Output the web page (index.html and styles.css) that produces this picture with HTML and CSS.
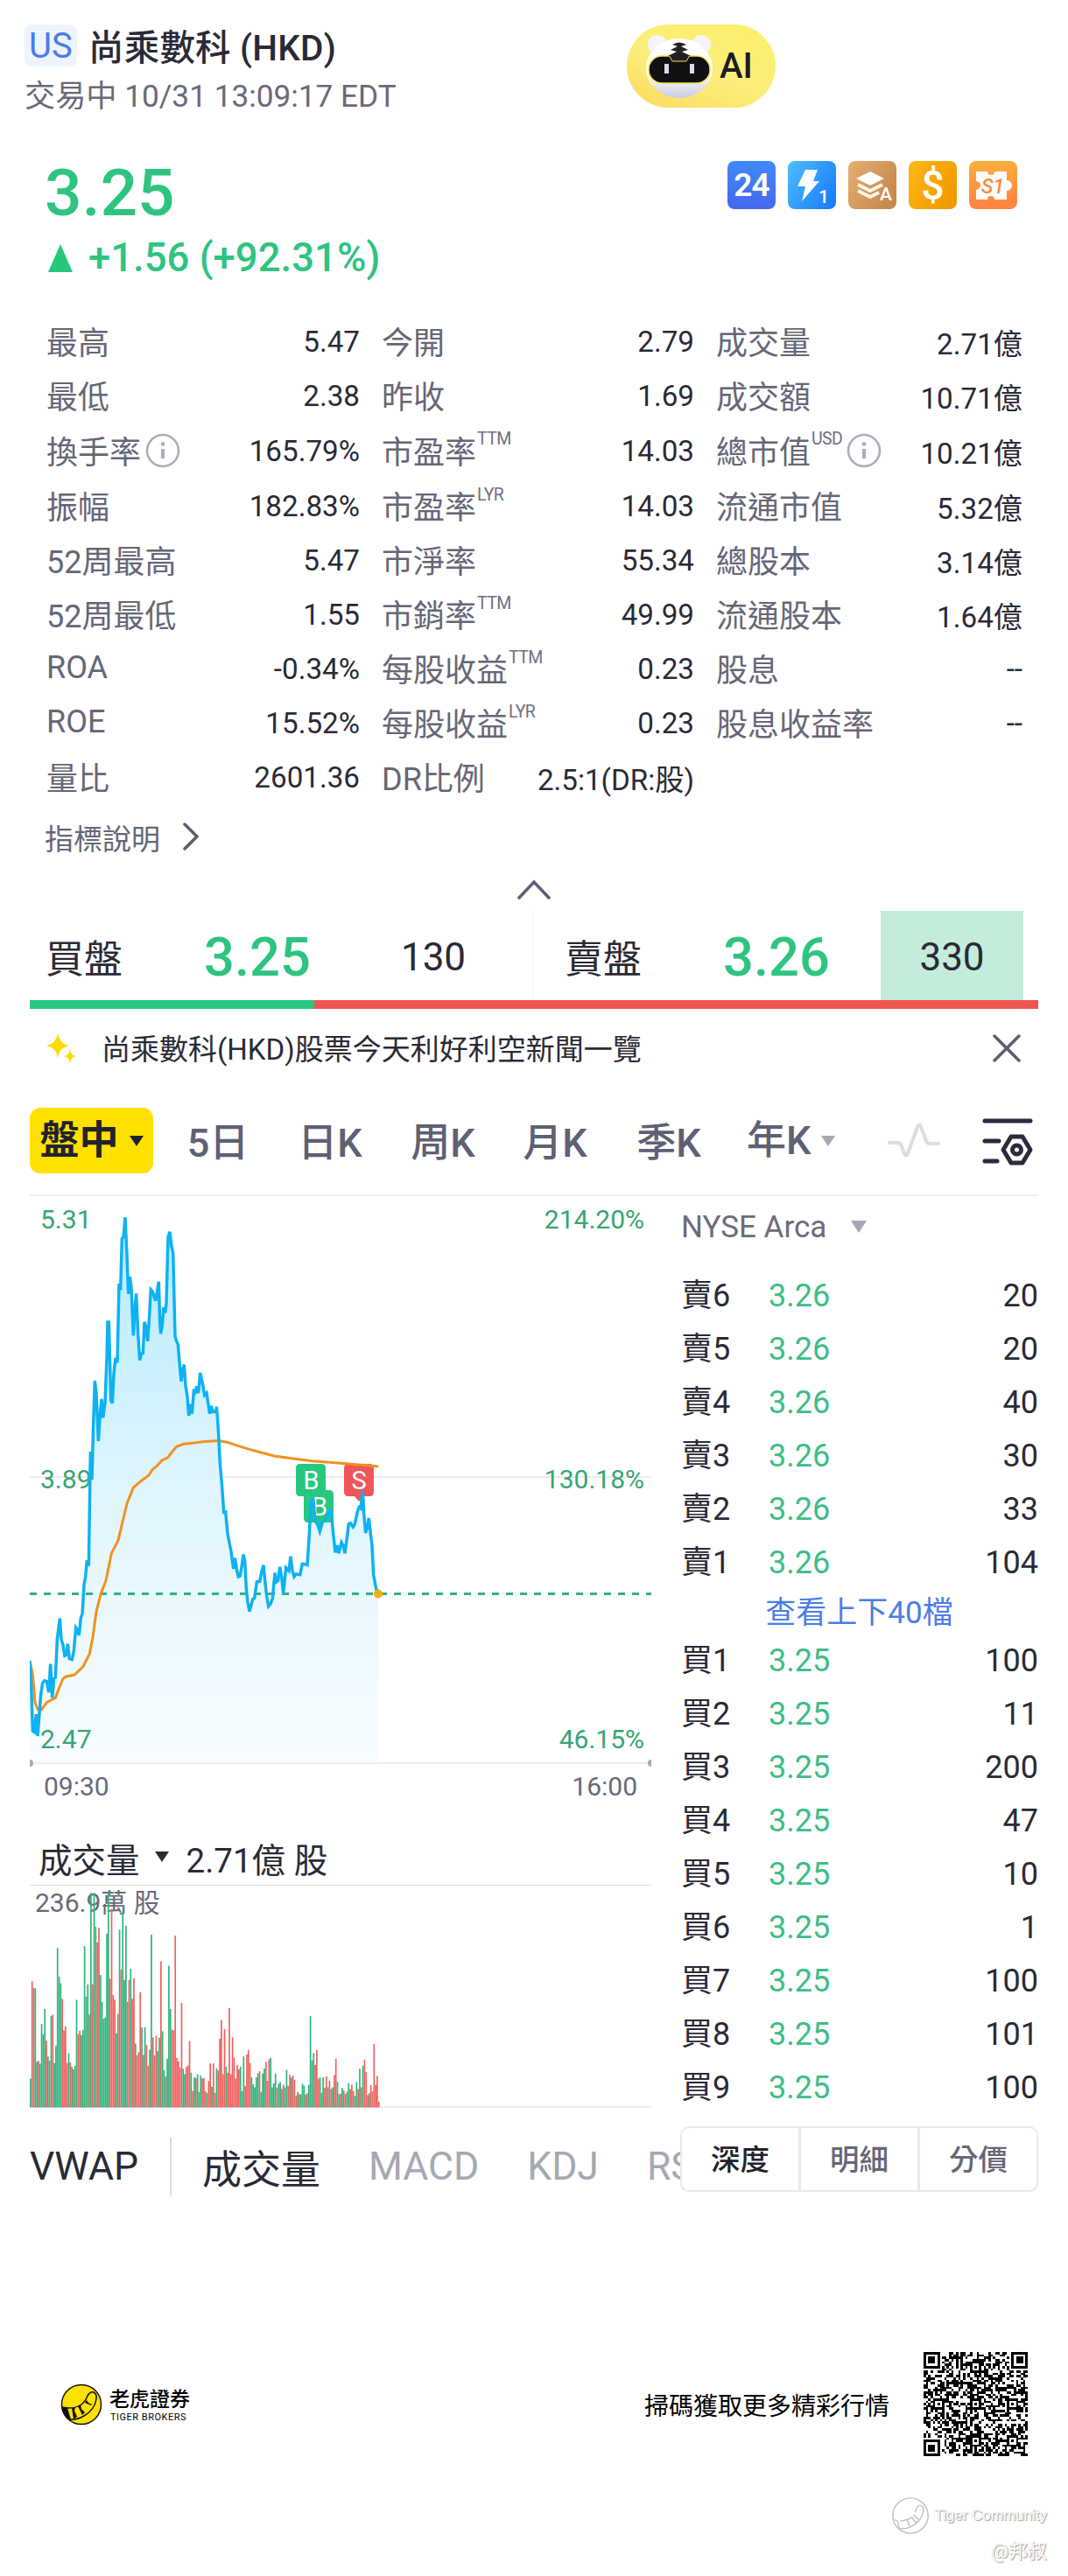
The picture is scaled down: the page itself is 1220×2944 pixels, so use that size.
FILE: index.html
```html
<!doctype html>
<html lang="zh-Hant">
	<head>
		<meta charset="utf-8">
		<meta name="viewport" content="width=device-width, initial-scale=1">
		<title>尚乘數科 (HKD)</title>
		<link rel="stylesheet" href="styles.css">
	</head>
	<body>
		<header class="header">
			<div class="header-info">
				<h1 class="title"><span class="market">US</span>尚乘數科 (HKD)</h1>
				<div class="status">交易中 10/31 13:09:17 EDT</div>
			</div>
			<button class="ai-button">
				<svg width="80" height="74" viewBox="0 0 80 74">
					<defs>
						<linearGradient id="head" x1="0" y1="0" x2="0" y2="1">
							<stop offset="0.6" stop-color="#fff" />
							<stop offset="1" stop-color="#c9cbe2" />
						</linearGradient>
					</defs>
					<circle cx="14" cy="12" r="11" fill="#f4f4fa" />
					<circle cx="64" cy="12" r="11" fill="#f4f4fa" />
					<ellipse cx="39" cy="39" rx="38" ry="34" fill="url(#head)" />
					<rect x="4" y="25" width="70" height="31" rx="15" fill="#111" stroke="#f3e34a" stroke-width="1.5" />
					<path d="M27 24l4 7h16l4-7z" fill="#222" stroke="#f3e34a" stroke-width="1" />
					<path d="M31 12q8-5 16 0l-6 2 8 4-7 2 10 5H26l10-5-7-2 8-4z" fill="#222" />
					<rect x="22" y="34" width="5" height="11" fill="#dcdce6" />
					<rect x="51" y="34" width="5" height="11" fill="#dcdce6" />
				</svg>
				<span>AI</span>
			</button>
		</header>

		<section class="quote">
			<div class="price-row">
				<div class="price">3.25</div>
				<div class="tags">
					<span class="tag tag-24">24</span>
					<span class="tag tag-level">
						<svg width="55" height="55" viewBox="0 0 55 55">
							<path d="M20 10h14l-5 13h7L16 46l4-17h-9z" fill="#fff" />
							<text x="35" y="48" class="tag-small">1</text>
						</svg>
					</span>
					<span class="tag tag-layer">
						<svg width="55" height="55" viewBox="0 0 55 55">
							<path d="M25 12l16 8-16 8-16-8z" fill="#fff" />
							<path d="M11 27l14 7 14-7M11 34l14 7 10-5" fill="none" stroke="#fff5e6" stroke-width="4" />
							<text x="36" y="45" class="tag-small">A</text>
						</svg>
					</span>
					<span class="tag tag-dollar">$</span>
					<span class="tag tag-coupon">
						<svg width="55" height="55" viewBox="0 0 55 55">
							<path d="M8 12h13a4 4 0 0 0 8 0h14v10a6 6 0 0 1 0 12v10H29a4 4 0 0 0-8 0H8V33a5 5 0 0 0 0-10z" fill="#fff" />
							<text x="14" y="37" class="coupon-text">S1</text>
						</svg>
					</span>
				</div>
			</div>
			<div class="change"><i class="up"></i>+1.56 (+92.31%)</div>
		</section>

		<section class="stats">
			<div class="stat"><label>最高</label><b>5.47</b></div>
			<div class="stat"><label>今開</label><b>2.79</b></div>
			<div class="stat"><label>成交量</label><b>2.71億</b></div>
			<div class="stat"><label>最低</label><b>2.38</b></div>
			<div class="stat"><label>昨收</label><b>1.69</b></div>
			<div class="stat"><label>成交額</label><b>10.71億</b></div>
			<div class="stat">
				<label>換手率</label>
				<svg class="info" width="40" height="40" viewBox="0 0 40 40"><circle cx="20" cy="20" r="18" /><path d="M20 18v11M20 10.5v4" /></svg>
				<b>165.79%</b>
			</div>
			<div class="stat"><label>市盈率</label><sup>TTM</sup><b>14.03</b></div>
			<div class="stat">
				<label>總市值</label><sup>USD</sup>
				<svg class="info" width="40" height="40" viewBox="0 0 40 40"><circle cx="20" cy="20" r="18" /><path d="M20 18v11M20 10.5v4" /></svg>
				<b>10.21億</b>
			</div>
			<div class="stat"><label>振幅</label><b>182.83%</b></div>
			<div class="stat"><label>市盈率</label><sup>LYR</sup><b>14.03</b></div>
			<div class="stat"><label>流通市值</label><b>5.32億</b></div>
			<div class="stat"><label>52周最高</label><b>5.47</b></div>
			<div class="stat"><label>市淨率</label><b>55.34</b></div>
			<div class="stat"><label>總股本</label><b>3.14億</b></div>
			<div class="stat"><label>52周最低</label><b>1.55</b></div>
			<div class="stat"><label>市銷率</label><sup>TTM</sup><b>49.99</b></div>
			<div class="stat"><label>流通股本</label><b>1.64億</b></div>
			<div class="stat"><label>ROA</label><b>-0.34%</b></div>
			<div class="stat"><label>每股收益</label><sup>TTM</sup><b>0.23</b></div>
			<div class="stat"><label>股息</label><b>--</b></div>
			<div class="stat"><label>ROE</label><b>15.52%</b></div>
			<div class="stat"><label>每股收益</label><sup>LYR</sup><b>0.23</b></div>
			<div class="stat"><label>股息收益率</label><b>--</b></div>
			<div class="stat"><label>量比</label><b>2601.36</b></div>
			<div class="stat"><label>DR比例</label><b>2.5:1(DR:股)</b></div>
		</section>
		<div class="explain">
			指標說明
			<svg width="20" height="34" viewBox="0 0 20 34"><path d="M2 3l14 14L2 31" /></svg>
		</div>
		<div class="collapse">
			<svg width="38" height="24" viewBox="0 0 38 24"><path d="M2 21L19 3l17 18" /></svg>
		</div>

		<section class="bidask">
			<div class="side bid">
				<span class="side-name">買盤</span>
				<span class="side-price">3.25</span>
				<span class="side-size">130</span>
			</div>
			<div class="side ask">
				<span class="side-name">賣盤</span>
				<span class="side-price">3.26</span>
				<span class="side-size flash">330</span>
			</div>
		</section>
		<div class="ratio"><div class="ratio-bid"></div></div>

		<div class="news">
			<svg width="36" height="36" viewBox="0 0 36 36">
				<path d="M14 1q2 12 13 14-11 2-13 14Q12 17 1 15 12 13 14 1z" fill="#ffdc00" />
				<path d="M28 19q1 7 7 8-6 1-7 8-1-7-7-8 6-1 7-8z" fill="#ffdc00" />
			</svg>
			<span class="news-text">尚乘數科(HKD)股票今天利好利空新聞一覽</span>
			<svg class="close" width="32" height="32" viewBox="0 0 32 32"><path d="M2 2l28 28M30 2L2 30" /></svg>
		</div>

		<nav class="periods">
			<span class="period active">盤中<i class="down"></i></span>
			<span class="period">5日</span>
			<span class="period">日K</span>
			<span class="period">周K</span>
			<span class="period">月K</span>
			<span class="period">季K</span>
			<span class="period year">年K<i class="down"></i></span>
			<svg class="wave" width="60" height="44" viewBox="0 0 60 44"><path d="M2 24h9q4 0 5 4l3 8q2 5 4 0L34 6q2-5 4 0l6 16q1 3 5 3h9" /></svg>
			<svg class="settings" width="60" height="56" viewBox="0 0 60 56">
				<path d="M4 4h52M4 27h16M4 50h14" />
				<path d="M34 22h13l9 15-9 15H34l-9-15z" stroke-linejoin="round" />
				<circle cx="40.500" cy="37" r="5" />
			</svg>
		</nav>

		<main class="main">
			<div class="charts">
				<svg class="price-chart" width="710" height="693" viewBox="0 0 710 693">
					<defs>
						<linearGradient id="area" x1="0" y1="0" x2="0" y2="1">
							<stop offset="0" stop-color="#b4ebff" />
							<stop offset="0.5" stop-color="#e0f5fd" />
							<stop offset="1" stop-color="#f8fdff" />
						</linearGradient>
					</defs>
					<path class="grid" d="M0 321H710M0 648H710" />
					<svg width="710" height="693" viewBox="42 15.700 2130 1552.300" preserveAspectRatio="none">
						<path id="price-area" fill="url(#area)" />
					</svg>
					<path d="M0 454.500H710" class="last" />
					<circle cx="0" cy="648" r="4" fill="#aaa" />
					<circle cx="710" cy="648" r="4" fill="#aaa" />
					<g class="axis">
						<text x="12" y="37">5.31</text>
						<text x="12" y="334">3.89</text>
						<text x="12" y="631">2.47</text>
						<text x="702" y="37" text-anchor="end">214.20%</text>
						<text x="702" y="334" text-anchor="end">130.18%</text>
						<text x="702" y="631" text-anchor="end">46.15%</text>
					</g>
					<g class="time">
						<text x="16" y="685">09:30</text>
						<text x="694" y="685" text-anchor="end">16:00</text>
					</g>
					<g class="marks">
						<path d="M309 306h24q5 0 5 5v27q0 5-5 5h-7l-5 6-5-6h-7q-5 0-5-5v-27q0-5 5-5z" fill="#28c77f" />
						<text x="321.500" y="335">B</text>
						<path d="M318 336h24q5 0 5 5v27q0 5-5 5h-7l-5 6-5-6h-7q-5 0-5-5v-27q0-5 5-5z" fill="#28c77f" />
						<text x="331" y="365">B</text>
						<path d="M364 306h24q5 0 5 5v27q0 5-5 5h-7l-5 6-5-6h-7q-5 0-5-5v-27q0-5 5-5z" fill="#f05558" />
						<text x="376" y="335">S</text>
					</g>
					<svg width="710" height="693" viewBox="42 15.700 2130 1552.300" preserveAspectRatio="none">
						<polyline id="vwap-line" class="line vwap" />
						<polyline id="price-line" class="line" />
					</svg>
					<circle cx="398" cy="454.500" r="5" fill="#f9ae0c" />
				</svg>

				<div class="volume-title">成交量<i class="down"></i>2.71億 股</div>
				<svg class="volume-chart" width="710" height="255" viewBox="0 0 710 255">
					<path class="grid" d="M0 253H710" />
					<text x="6" y="30">236.9萬 股</text>
					<g id="volume-bars"></g>
				</svg>

				<div class="indicators">
					<span class="main-indicator">VWAP</span>
					<span class="selected">成交量</span>
					<span>MACD</span>
					<span>KDJ</span>
					<span>RSI</span>
				</div>
			</div>

			<div class="depth">
				<div class="exchange">NYSE Arca<i class="down"></i></div>
				<div class="book">
					<div class="book-rows">
						<div class="level"><span>賣7</span></div>
						<div class="level"><span>賣6</span><em>3.26</em><b>20</b></div>
						<div class="level"><span>賣5</span><em>3.26</em><b>20</b></div>
						<div class="level"><span>賣4</span><em>3.26</em><b>40</b></div>
						<div class="level"><span>賣3</span><em>3.26</em><b>30</b></div>
						<div class="level"><span>賣2</span><em>3.26</em><b>33</b></div>
						<div class="level"><span>賣1</span><em>3.26</em><b>104</b></div>
						<a class="more">查看上下40檔</a>
						<div class="level"><span>買1</span><em>3.25</em><b>100</b></div>
						<div class="level"><span>買2</span><em>3.25</em><b>11</b></div>
						<div class="level"><span>買3</span><em>3.25</em><b>200</b></div>
						<div class="level"><span>買4</span><em>3.25</em><b>47</b></div>
						<div class="level"><span>買5</span><em>3.25</em><b>10</b></div>
						<div class="level"><span>買6</span><em>3.25</em><b>1</b></div>
						<div class="level"><span>買7</span><em>3.25</em><b>100</b></div>
						<div class="level"><span>買8</span><em>3.25</em><b>101</b></div>
						<div class="level"><span>買9</span><em>3.25</em><b>100</b></div>
						<div class="level"><span>買10</span></div>
					</div>
				</div>
				<div class="depth-tabs">
					<span class="selected">深度</span>
					<span>明細</span>
					<span>分價</span>
				</div>
			</div>
		</main>

		<footer class="footer">
			<svg class="logo" width="48" height="48" viewBox="0 0 48 48">
				<circle cx="24" cy="24" r="22.500" fill="#ffe100" stroke="#111" stroke-width="1.500" />
				<path d="M2 27q13 3 22-3 5-4 7-10 3-5 7-4 4 2 3 8-2 12-14 19-8 5-17 4" fill="none" stroke="#111" stroke-width="1.500" />
				<path d="M2 27l6 1 4 13-4-1q-5-5-6-13zM13 28l4-1-1 4 3 7-4 3zM20 26l3-2 1 5 4 4-3 3zM28 22l2-3 2 3 4 2-1 1z" fill="#111" />
			</svg>
			<div class="brand">
				<strong>老虎證券</strong>
				<small>TIGER BROKERS</small>
			</div>
			<span class="scan">掃碼獲取更多精彩行情</span>
			<svg class="qr" width="119" height="119" viewBox="0 0 45 45" shape-rendering="crispEdges"><path id="qr-path" /></svg>
		</footer>

		<div class="community">
			<div class="community-name">
				<svg width="44" height="44" viewBox="0 0 48 48">
					<circle cx="24" cy="24" r="22" />
					<path d="M4 29l4 2 2 9q14 2 25-10 7-10 5-16-4-6-8 0l-2 6M11 31l9-2 3 8M20 29l6-3 5 7M28 23l6 6" />
				</svg>
				Tiger Community
			</div>
			<div class="author">@邦叔</div>
		</div>

		<script src="chart.js"></script>
	</body>
</html>
```

FILE: styles.css
```css
body {
	margin: 0;
	width: 1220px;
	height: 2944px;
	overflow: hidden;
	background: #fff;
	color: #2a2a35;
	font-family: Roboto, "Noto Sans CJK TC", sans-serif;
}

i, em {
	font-style: normal;
}

b {
	font-weight: 400;
}

svg {
	flex: none;
	display: block;
}

.header {
	display: flex;
	height: 140px;
	padding: 28px 0 0 28px;
	box-sizing: border-box;
}

.header-info {
	width: 688px;
}

.title {
	display: flex;
	margin: 0;
	font-size: 40.500px;
	font-weight: 500;
	line-height: 54px;
	letter-spacing: 0.200px;
	height: 48px;
}

.market {
	width: 60px;
	height: 48px;
	margin-right: 13px;
	line-height: 49px;
	border-radius: 8px;
	background: #eef4fe;
	color: #4a7de8;
	font-size: 40px;
	font-weight: 400;
	text-align: center;
}

.status {
	margin-top: 13px;
	font-size: 35.200px;
	line-height: 42px;
	color: #696979;
}

.ai-button {
	display: flex;
	align-items: center;
	width: 170px;
	height: 95px;
	padding: 0 0 0 21px;
	border: 0;
	border-radius: 48px;
	background: linear-gradient(200deg, #fdf06a, #fdee7c 55%, #fbd95c);
	color: #1c1c22;
	font: 500 40px Roboto, sans-serif;
}

.ai-button span {
	margin-left: 5px;
}

.quote {
	height: 219px;
	padding: 0 58px 0 51px;
}

.price-row {
	display: flex;
	justify-content: space-between;
	height: 130px;
}

.price {
	margin-top: 30px;
	font-size: 75px;
	font-weight: 500;
	line-height: 100px;
	color: #2ec480;
}

.tags {
	display: flex;
	gap: 14px;
	margin-top: 44px;
}

.tag {
	width: 55px;
	height: 55px;
	border-radius: 8px;
	color: #fff;
	font-weight: 500;
	line-height: 56px;
	text-align: center;
}

.tag-24 {
	background: linear-gradient(180deg, #3f8af8, #4767f0);
	font-size: 37px;
	font-weight: 600;
	letter-spacing: -1px;
}

.tag-level {
	background: linear-gradient(120deg, #4fbcff, #1478f8);
}

.tag-layer {
	background: linear-gradient(120deg, #e4ae72, #c28448);
}

.tag-dollar {
	background: linear-gradient(120deg, #fdb813, #f19500);
	font-size: 46px;
}

.tag-coupon {
	background: linear-gradient(180deg, #fcae3a, #ff8244);
}

.tag-small {
	fill: #fff;
	font-size: 21px;
	text-anchor: start;
}

.coupon-text {
	fill: #f98a3c;
	font-size: 23px;
	font-style: italic;
	text-anchor: start;
}

.change {
	display: flex;
	align-items: center;
	font-size: 45.500px;
	font-weight: 500;
	line-height: 50px;
	color: #2ec480;
}

.up {
	margin: 0 18px 0 4px;
	border: 14px solid transparent;
	border-top: 0;
	border-bottom: 32px solid #28c77f;
}

.down {
	border: 8px solid transparent;
	border-bottom: 0;
	border-top: 12px solid currentColor;
}

.stats {
	display: grid;
	grid-template-columns: 358px 357px 350px;
	grid-template-rows: 62px 62px 64px repeat(6, 62px);
	column-gap: 25px;
	padding-left: 53px;
}

.stat {
	display: flex;
	align-items: center;
	font-size: 33.200px;
}

.stat label {
	margin-top: -2px;
	font-size: 36px;
	color: #666676;
}

.stat sup {
	align-self: flex-start;
	margin: 9px 0 0 1px;
	font-size: 19.500px;
	line-height: 20px;
	letter-spacing: -0.600px;
	color: #6f6f7e;
}

.stat b {
	margin-left: auto;
}

.info {
	margin-left: 5px;
	fill: none;
	stroke: #a8adb8;
	stroke-width: 2.500;
}

.info path {
	stroke-width: 4;
}

.explain {
	display: flex;
	align-items: center;
	gap: 26px;
	height: 76px;
	padding-left: 51px;
	font-size: 33px;
	color: #666676;
}

.explain svg {
	margin-top: -3px;
}

.explain svg, .collapse svg, .close {
	fill: none;
	stroke: #5b5d72;
	stroke-width: 3.500;
	stroke-linecap: round;
}

.collapse {
	display: flex;
	justify-content: center;
	align-items: center;
	height: 44px;
	padding-bottom: 2px;
}

.bidask {
	display: flex;
	height: 102px;
	padding: 0 51px 0 34px;
}

.side {
	display: flex;
	align-items: center;
	font-size: 44px;
}

.bid {
	width: 575px;
	border-right: 1px solid #efeff2;
}

.side-name {
	width: 181px;
	padding-left: 18px;
	padding-top: 2px;
}

.ask .side-name {
	padding-left: 36px;
}

.side-price {
	width: 180px;
	padding-top: 3px;
	font-size: 61.500px;
	font-weight: 500;
	color: #2ec480;
}

.side-size {
	width: 163px;
	line-height: 107px;
	height: 102px;
	text-align: center;
}

.bid .side-size {
	width: 120px;
	padding-left: 22px;
}

.flash {
	background: #c3edda;
}

.ratio {
	height: 10px;
	margin: 0 34px;
	background: #ef5552;
}

.ratio-bid {
	width: 325px;
	height: 10px;
	background: #28c77f;
}

.news {
	display: flex;
	align-items: center;
	height: 94px;
	padding: 0 54px 0 52px;
	font-size: 33px;
}

.news svg {
	margin-top: -4px;
}

.news-text {
	margin-left: 28px;
	line-height: 40px;
}

.news .close {
	margin-left: auto;
}

.periods {
	display: flex;
	align-items: center;
	height: 113px;
	margin: 0 34px;
	padding-bottom: 5px;
	border-bottom: 2px solid #efefef;
	font-size: 45px;
	font-weight: 500;
	color: #5e6074;
}

.period {
	width: 130px;
	line-height: 82px;
	height: 75px;
	text-align: center;
	flex: none;
}

.period:nth-child(2) {
	width: 124px;
	margin-left: 12px;
}

.period:nth-child(3) {
	width: 132px;
}

.period:nth-child(4) {
	width: 126px;
}

.period.active {
	display: flex;
	align-items: center;
	justify-content: center;
	gap: 12px;
	width: 141px;
	border-radius: 12px;
	background: #ffe100;
	color: #22222c;
	font-weight: 600;
}

.period.year {
	display: flex;
	align-items: center;
	gap: 12px;
	width: 160px;
	padding-left: 24px;
	box-sizing: border-box;
}

.year .down {
	color: #a5a8b4;
}

.wave {
	margin-left: 25px;
	fill: none;
	stroke: #dcdce2;
	stroke-width: 4;
	stroke-linecap: round;
}

.settings {
	margin: 2px 5px 0 auto;
	fill: none;
	stroke: #2a2b3c;
	stroke-width: 5;
	stroke-linecap: round;
}

.main {
	display: flex;
	height: 1175px;
	padding-left: 34px;
}

.charts {
	width: 743px;
	overflow: hidden;
}

.grid {
	stroke: #ececee;
	stroke-width: 2;
}

.last {
	stroke: #33b27a;
	stroke-width: 3;
	stroke-dasharray: 8 8;
}

.axis {
	fill: #37a572;
	font-size: 30px;
}

.time {
	fill: #696979;
	font-size: 30px;
}

.marks {
	fill: #fff;
	font-size: 29px;
	text-anchor: middle;
}

.line {
	fill: none;
	stroke: #0eb2f2;
	stroke-width: 3.500;
	vector-effect: non-scaling-stroke;
}

.vwap {
	stroke: #f0921e;
	stroke-width: 3;
}

.volume-title {
	display: flex;
	align-items: center;
	margin-top: 35px;
	width: 700px;
	height: 55px;
	padding: 0 0 4px 10px;
	border-bottom: 1px solid #dedee2;
	font-size: 38.500px;
}

.volume-title .down {
	margin: 0 20px 2px 17px;
}

.volume-chart text {
	fill: #696979;
	font-size: 30px;
}

.bar-up {
	fill: #2fb57d;
}

.bar-down {
	fill: #ee6260;
}

.indicators {
	display: flex;
	align-items: center;
	height: 132px;
	gap: 55px;
	font-size: 44.500px;
	color: #a6a8b3;
	white-space: nowrap;
}

.indicators span {
	flex: none;
}

.indicators .main-indicator {
	width: 160px;
	margin-right: -20px;
	line-height: 66px;
	border-right: 2px solid #dcdce0;
	color: #2a2a35;
}

.indicators .selected {
	font-size: 45px;
	color: #2a2a35;
}

.depth {
	width: 409px;
}

.exchange {
	display: flex;
	align-items: center;
	gap: 28px;
	height: 66px;
	padding: 2px 0 0 1px;
	font-size: 35px;
	color: #6b6b7a;
}

.exchange .down {
	border-width: 14px 9px 0;
	color: #a5a8b4;
}

.book {
	height: 995px;
	overflow: hidden;
}

.book-rows {
	margin-top: -45px;
}

.level {
	display: flex;
	height: 61px;
	padding: 0 0 0 1px;
	font-size: 36px;
	line-height: 61px;
}

.level span {
	width: 100px;
}

.level em {
	color: #3dbd85;
}

.level b {
	margin-left: auto;
}

.more {
	display: block;
	height: 51px;
	line-height: 53px;
	text-align: center;
	font-size: 35px;
	color: #4a7de8;
}

.depth-tabs {
	display: flex;
	height: 75px;
	box-sizing: border-box;
	border: 2px solid #e9e9eb;
	border-radius: 10px;
	line-height: 74px;
	font-size: 33.500px;
	font-weight: 500;
	text-align: center;
	color: #666676;
}

.depth-tabs span {
	flex: 1;
}

.depth-tabs span + span {
	border-left: 3px solid #e9e9eb;
}

.depth-tabs .selected {
	color: #22222c;
}

.footer {
	display: flex;
	align-items: center;
	margin-top: 146px;
	height: 119px;
	padding: 0 46px 0 69px;
	color: #000;
}

.brand {
	display: flex;
	flex-direction: column;
	margin: 5px 0 0 8px;
}

.brand strong {
	font-size: 23px;
	font-weight: 500;
	line-height: 24px;
}

.brand small {
	margin-left: 1px;
	font-size: 11px;
	line-height: 15px;
	letter-spacing: 0.500px;
}

.scan {
	margin-left: auto;
	margin-right: 39px;
	font-size: 28px;
}

.community {
	display: flex;
	flex-direction: column;
	align-items: flex-end;
	margin-top: 46px;
	padding-right: 24px;
	color: #fff;
	text-shadow: 1px 1px 1px #999, 0 0 1px #bbb;
}

.community-name {
	display: flex;
	align-items: center;
	gap: 5px;
	font: 17px "Liberation Sans", sans-serif;
}

.community svg {
	fill: none;
	stroke: #bdbdbd;
	stroke-width: 1.500;
}

.author {
	margin-top: 2px;
	font-size: 22px;
	line-height: 34px;
}
```

FILE: chart.js
```js
var price = "42,1205 48,1290 52,1385 58,1388 64,1342 69,1398 76,1330 80,1290 86,1262 92,1256 100,1258 107,1286 113,1213 119,1300 125,1250 130,1248 136,1150 145,1097 150,1150 156,1165 162,1192 168,1190 172,1162 178,1200 187,1202 193,1180 200,1120 205,1125 211,1140 217,1095 222,1085 228,1010 233,990 238,948 244,962 250,670 255,742 260,600 265,488 270,520 277,643 283,575 288,535 293,583 300,545 306,430 309,338 313,338 320,538 325,546 330,470 336,430 342,442 348,240 353,256 358,125 363,120 369,70 374,150 380,266 385,222 390,250 397,373 402,310 407,265 413,370 419,436 424,420 430,418 435,338 440,350 446,387 452,320 457,255 463,260 473,284 478,262 484,235 488,340 491,368 496,345 501,300 506,315 510,290 516,120 522,107 528,145 533,160 540,375 544,385 550,395 556,450 561,490 566,460 571,447 576,500 582,530 587,578 593,548 598,573 604,515 609,518 614,503 620,520 626,468 634,495 641,525 648,520 653,545 659,573 664,553 670,568 680,568 682,555 686,590 690,640 694,700 701,760 707,825 713,824 720,880 725,900 732,925 740,970 745,942 752,975 757,990 763,988 768,965 774,933 779,950 784,1020 789,1055 795,1079 800,1065 806,1048 812,1045 820,1003 830,1002 836,980 843,960 848,1000 854,1040 860,1066 867,1060 874,1045 882,980 888,1003 893,1000 899,965 905,990 911,1033 920,967 930,975 936,938 942,975 948,990 955,983 968,985 976,957 984,958 993,960 1000,880 1006,800 1013,787 1019,840 1030,860 1036,874 1045,850 1056,845 1066,822 1075,822 1082,880 1089,928 1095,910 1101,930 1110,902 1116,910 1122,930 1130,885 1135,855 1141,853 1150,863 1156,855 1166,820 1171,812 1176,815 1183,770 1187,830 1193,878 1198,865 1204,840 1210,880 1215,910 1220,985 1225,1005 1231,1028 1236,1034";

var vwap = "42,1205 52,1240 60,1312 70,1330 82,1331 100,1312 115,1306 130,1300 140,1280 155,1252 165,1246 195,1241 225,1220 247,1187 258,1145 270,1080 285,1035 303,1000 322,930 345,897 360,850 375,803 397,762 420,747 450,730 462,716 480,705 495,692 515,685 530,670 545,657 570,650 600,648 640,644 690,642 720,646 760,656 800,665 840,673 880,681 940,687 1010,694 1100,699 1180,704 1237,708";

// one entry per minute: bar top (base is 986) and direction
var volume = "887g 553r 576r 578g 830g 826r 836g 700g 735g 648g 757r 812g 825r 672g 668r 834g 774g 440g 537g 560g 614r 722r 708r 834r 800g 832r 847g 855r 843g 617g 735r 723r 738g 720g 433g 606g 564g 667r 250g 564r 250g 366g 420r 370r 532g 624g 682g 678g 390g 250g 545r 305r 600r 617r 732g 665r 376g 513r 315g 549g 363g 624r 549r 510g 613r 543r 767g 807r 796r 591r 712g 806r 711g 772r 843r 788g 393g 746r 807r 740r 793g 747g 485r 725g 858g 880r 819g 500g 648g 720r 722r 397r 816r 828r 850r 628r 853g 872g 847r 842r 758r 867g 930r 883g 885r 872g 933g 877g 886r 886r 930r 936g 895r 835r 915g 835r 936r 852g 860r 750r 686r 872r 717r 846g 867r 645r 872r 745r 815r 887r 840r 855r 846g 930g 811g 912r 804r 789r 834r 883g 907g 917g 883g 869g 862r 933g 870g 853g 830r 895r 821r 816g 917g 903g 870g 919r 905g 899g 922r 908r 917g 857g 912r 874r 884g 877r 891r 945r 933g 940r 941g 905g 911g 942r 937r 908g 673g 825g 800g 840r 789r 888r 883g 935g 883g 919r 879r 917g 894r 923r 917g 875r 819r 898g 940g 939r 919g 928r 940r 932g 903g 923r 908r 930r 947g 899g 923r 853g 917r 843g 822r 864r 944r 937g 909r 931r 768r 908r 878r 966r";

document.querySelector("#price-line").setAttribute("points", price);
document.querySelector("#vwap-line").setAttribute("points", vwap);
document.querySelector("#price-area").setAttribute("d", "M" + price.split(" ").join("L") + "V1466H42Z");

var bars = document.querySelector("#volume-bars");

volume.split(" ").forEach((v, i) => {
	var height = (986 - parseInt(v)) / 3;
	var bar = document.createElementNS("http://www.w3.org/2000/svg", "rect");

	bar.setAttribute("class", v.endsWith("g") ? "bar-up" : "bar-down");
	bar.setAttribute("x", i * 1.817);
	bar.setAttribute("y", 253.5 - height);
	bar.setAttribute("width", 1.7);
	bar.setAttribute("height", height);
	bars.appendChild(bar);
});

function Ring(x, y, cx, cy, r) {
	var d = Math.max(Math.abs(x - cx), Math.abs(y - cy));

	if (d > r) return null;
	if (r == 4) return d == 3 || d < 2;
	return d != 1;
}

function DrawQr() {
	var d = "";
	var seed = 7;
	var marks = [[3, 3, 4], [41, 3, 4], [3, 41, 4], [22, 6, 2], [6, 22, 2], [22, 22, 2], [38, 22, 2], [22, 38, 2], [38, 38, 2]];

	for (var y = 0; y < 45; y++) {
		for (var x = 0; x < 45; x++) {
			seed = (seed * 16807) % 2147483647;

			var on = seed % 100 < 50;

			if (x == 6) on = y % 2 == 0;
			if (y == 6) on = x % 2 == 0;

			marks.forEach(m => {
				var r = Ring(x, y, m[0], m[1], m[2]);
				if (r !== null) on = r;
			});

			if (on) d += "M" + x + " " + y + "h1v1h-1z";
		}
	}

	document.querySelector("#qr-path").setAttribute("d", d);
}

DrawQr();
```
